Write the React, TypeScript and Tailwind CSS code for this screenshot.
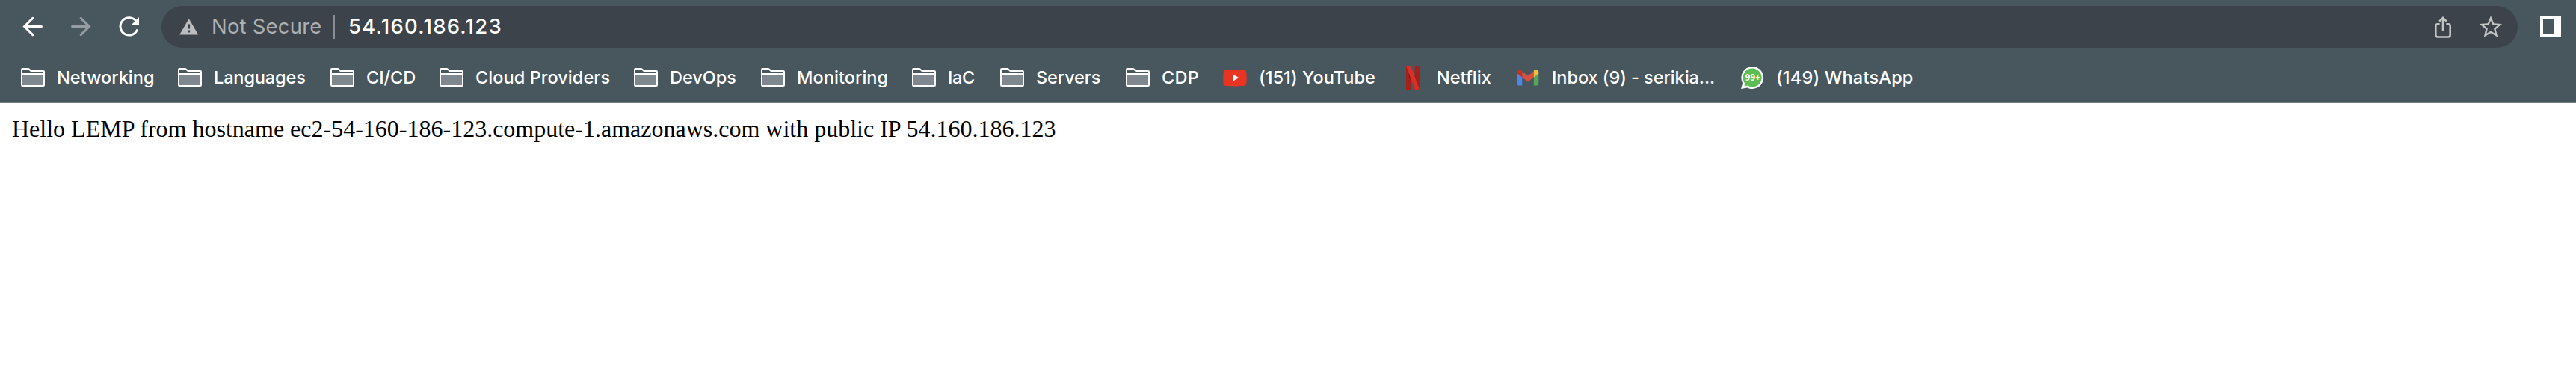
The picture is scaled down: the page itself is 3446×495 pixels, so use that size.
import type { ReactNode } from "react";

function FolderIcon() {
  return (
    <svg className="size-8 shrink-0" viewBox="0 0 32 32" fill="none">
      <path d="M2 12H30V26H2Z" fill="#7f878f" />
      <path
        d="M1 26V5Q1 4 2 4H9.5Q10.5 4 11.2 4.8L13.4 7H30Q31 7 31 8V26Q31 27 30 27H2Q1 27 1 26ZM1 11H31"
        stroke="#fff"
        strokeWidth="2"
      />
    </svg>
  );
}

function YouTubeIcon() {
  return (
    <svg className="size-8 shrink-0" viewBox="0 0 32 32">
      <path
        d="M4.5 5.4Q16 4.6 27.5 5.4Q31 5.7 31.4 9Q32 16.2 31.4 23.4Q31 26.7 27.5 27Q16 27.8 4.5 27Q1 26.7.6 23.4Q0 16.2.6 9Q1 5.7 4.5 5.4Z"
        fill="#e93323"
      />
      <path d="M13 11.2L21 16.1L13 21Z" fill="#fff" />
    </svg>
  );
}

function NetflixIcon() {
  return (
    <svg className="size-8 shrink-0" viewBox="0 0 32 32">
      <path d="M7 0H13V32H7ZM18.6 0H25V32H18.6Z" fill="#a52019" />
      <path d="M10 8L13 16V20L8.5 6ZM18.6 8V16L22 24L18.6 12Z" fill="#7c1a16" />
      <path d="M7 0H13.4L25 32Q21.8 31.6 18.8 32L7 0Z" fill="#d92f26" />
    </svg>
  );
}

function GmailIcon() {
  return (
    <svg className="size-8 shrink-0" viewBox="0 0 32 32">
      <path d="M1.7 9.5L8.2 14V26.6H3.7Q1.7 26.6 1.7 24.6Z" fill="#4f86ec" />
      <path d="M30.3 9.5L23.8 14V26.6H28.3Q30.3 26.6 30.3 24.6Z" fill="#58a65c" />
      <path d="M8.2 7.6L16 13.5L23.8 7.6V15.5L16 21.4L8.2 15.5Z" fill="#d85140" />
      <path d="M1.7 8.4C1.7 5 5.3 3.8 8.2 6.6V15.5L1.7 10.6Z" fill="#b9352b" />
      <path d="M30.3 8.4C30.3 5 26.7 3.8 23.8 6.6V15.5L30.3 10.6Z" fill="#f1bf42" />
    </svg>
  );
}

function WhatsAppIcon() {
  return (
    <svg className="size-8 shrink-0" viewBox="0 0 32 32">
      <path
        d="M16 1A15 15 0 1 1 9.4 29.4L1 31L3.2 23.2A15 15 0 0 1 16 1Z"
        fill="#fff"
      />
      <path
        d="M16 3.6A12.4 12.4 0 1 1 9.8 26.6L5.6 27.6L6 23.4A12.4 12.4 0 0 1 16 3.6Z"
        fill="#5bbd52"
      />
      <text
        x="16.8"
        y="20.4"
        textAnchor="middle"
        textLength="20"
        lengthAdjust="spacingAndGlyphs"
        className="fill-white font-['Open_Sans',sans-serif] text-[12.5px] font-bold"
      >
        99+
      </text>
    </svg>
  );
}

function Bookmark({ icon, label, className }: { icon?: ReactNode; label: string; className: string }) {
  return (
    <a className={`flex shrink-0 items-center gap-4 whitespace-nowrap ${className}`}>
      {icon ?? <FolderIcon />}
      <span>{label}</span>
    </a>
  );
}

function Toolbar() {
  return (
    <div className="flex h-[72px] items-center pl-7">
      <svg className="size-8 shrink-0" viewBox="0 0 32 32" fill="none" stroke="#fff" strokeWidth="3" strokeLinecap="round">
        <path d="M27.5 15.5H5M15.8 4.4L4.6 15.5L15.8 26.6" />
      </svg>
      <svg className="ml-8 size-8 shrink-0" viewBox="0 0 32 32" fill="none" stroke="#959ca2" strokeWidth="3" strokeLinecap="round">
        <path d="M4.5 15.5H27M16.2 4.4L27.4 15.5L16.2 26.6" />
      </svg>
      <svg className="ml-8 size-8 shrink-0" viewBox="0 0 32 32" fill="none">
        <path d="M26 8.2A11.7 11.7 0 1 0 27.2 20.6" stroke="#fff" strokeWidth="3" strokeLinecap="round" />
        <path d="M30 3V14H19Z" fill="#fff" />
      </svg>
      <div className="ml-7 flex h-14 w-[3152px] shrink-0 items-center rounded-full bg-[#3c434a] pr-5 pl-6 text-[27.5px]">
        <svg className="h-[22px] w-[26px] shrink-0" viewBox="0 0 26 22">
          <path d="M12.7 0L25.2 21.5H.2Z" fill="#bbbdc0" />
          <path d="M11.1 7.6H14.1V13.6H11.1ZM11.1 15.6H14.1V18.6H11.1Z" fill="#3c434a" />
        </svg>
        <span className="ml-[17px] w-[163px] tracking-[0.2px] whitespace-nowrap text-[#adb0b3]">Not Secure</span>
        <span className="h-8 w-0.5 bg-[#898d91]" />
        <span className="ml-[18px] grow font-medium tracking-[1.25px] whitespace-nowrap text-white">54.160.186.123</span>
        <svg className="h-8 w-6 shrink-0" viewBox="0 0 24 32" fill="none" stroke="#c4c4c4" strokeWidth="2.6">
          <path d="M7.6 12.3H5Q2.3 12.3 2.3 15V26.8Q2.3 29.5 5 29.5H19Q21.7 29.5 21.7 26.8V15Q21.7 12.3 19 12.3H16.4" />
          <path d="M12 21V3.8M7.2 8.6L12 3.8L16.8 8.6" />
        </svg>
        <svg className="ml-9 h-8 w-8 shrink-0" viewBox="0 0 32 32">
          <path
            d="M31 12.1L20.2 11.2L16 1.3L11.8 11.2L1 12.1L9.2 19.2L6.7 29.8L16 24.2L25.3 29.8L22.8 19.2ZM16 21.4L10.4 24.8L11.9 18.4L6.9 14.1L13.5 13.5L16 7.5L18.5 13.5L25.1 14.1L20.1 18.4L21.6 24.8Z"
            fill="#c4c4c4"
            fillRule="evenodd"
          />
        </svg>
      </div>
      <div className="ml-[30px] h-7 w-7 shrink-0 border-4 border-r-[10px] border-white" />
    </div>
  );
}

export default function App() {
  return (
    <div className="h-[495px] w-[3446px] overflow-hidden bg-white font-[Inter,sans-serif]">
      <header className="border-b-2 border-[#757d84] bg-[#48565e]">
        <Toolbar />
        <nav className="flex h-16 items-center pl-7 text-[23.5px] font-medium text-white">
          <Bookmark label="Networking" className="w-[210px]" />
          <Bookmark label="Languages" className="w-[204px] tracking-[-0.13px]" />
          <Bookmark label="CI/CD" className="w-[146px] tracking-[-0.1px]" />
          <Bookmark label="Cloud Providers" className="w-[260px] tracking-[0.06px]" />
          <Bookmark label="DevOps" className="w-[170px]" />
          <Bookmark label="Monitoring" className="w-[202px] tracking-[0.05px]" />
          <Bookmark label="IaC" className="w-[118px] tracking-[-0.4px]" />
          <Bookmark label="Servers" className="w-[168px] tracking-[-0.1px]" />
          <Bookmark label="CDP" className="w-[130px] tracking-[0.3px]" />
          <Bookmark icon={<YouTubeIcon />} label="(151) YouTube" className="w-[238px] tracking-[0.05px]" />
          <Bookmark icon={<NetflixIcon />} label="Netflix" className="w-[154px]" />
          <Bookmark icon={<GmailIcon />} label="Inbox (9) - serikia..." className="w-[300px] tracking-[-0.05px]" />
          <Bookmark icon={<WhatsAppIcon />} label="(149) WhatsApp" className="w-[236px] tracking-[0.2px]" />
        </nav>
      </header>
      <main className="p-4 font-['Liberation_Serif',serif] text-[32px] leading-[37px] text-black">
        Hello LEMP from hostname ec2-54-160-186-123.compute-1.amazonaws.com with public IP 54.160.186.123
      </main>
    </div>
  );
}
